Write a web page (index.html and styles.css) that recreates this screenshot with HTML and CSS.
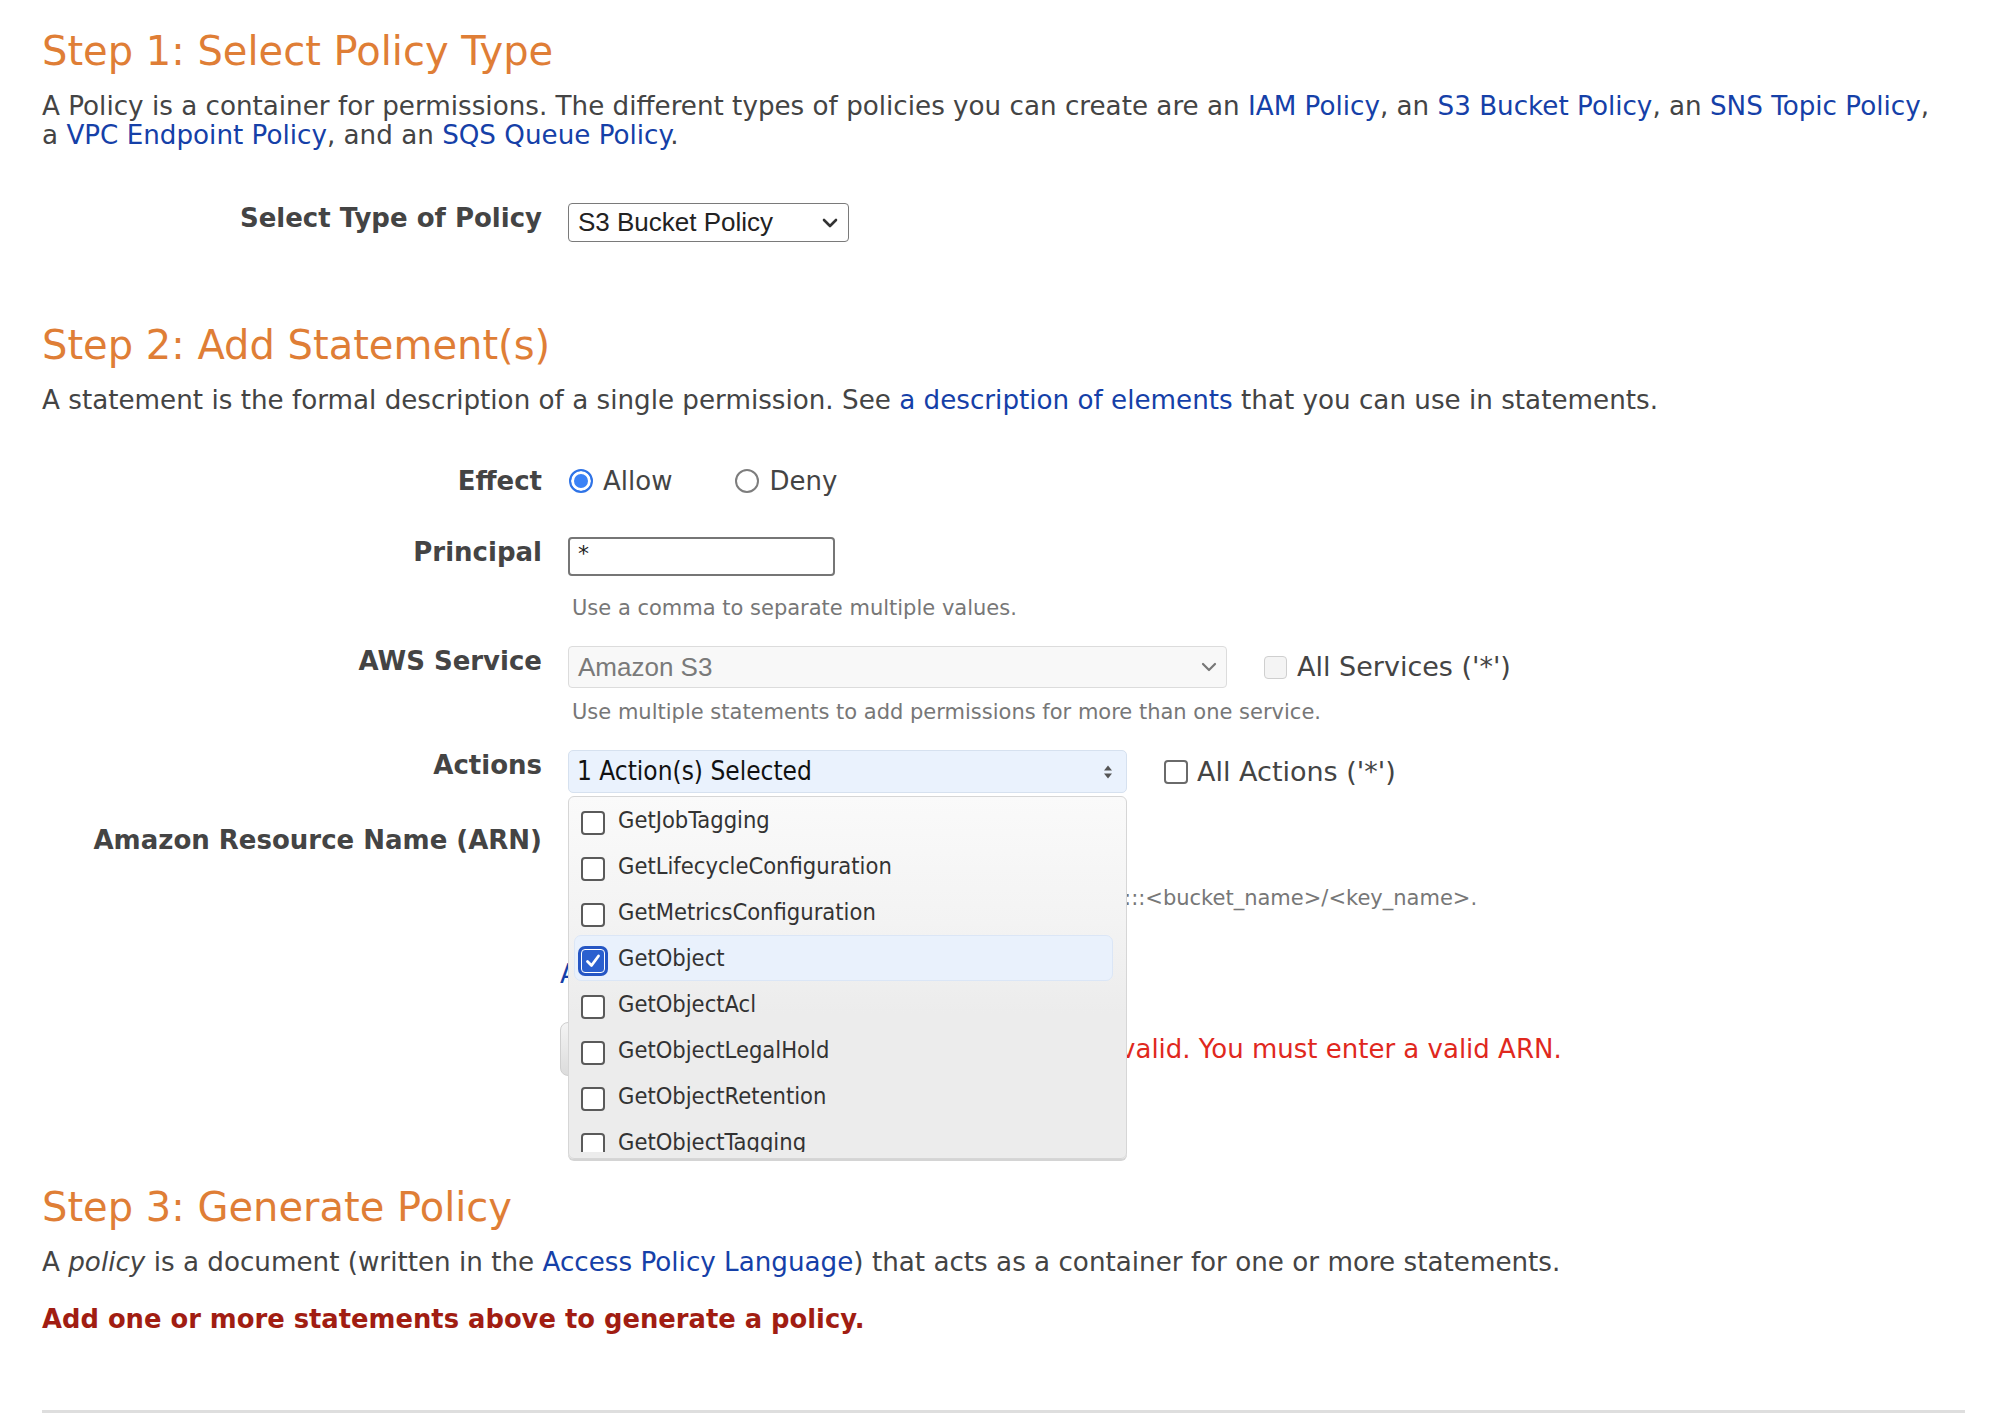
FILE: index.html
```html
<!DOCTYPE html>
<html lang="en">
<head>
<meta charset="utf-8">
<title>AWS Policy Generator</title>
<link rel="stylesheet" href="styles.css">
</head>
<body>
<div class="page">

  <section class="step">
    <h2 class="step-title">Step 1: Select Policy Type</h2>
    <p class="intro">A Policy is a container for permissions. The different types of policies you can create are an <a href="#">IAM Policy</a>, an <a href="#">S3 Bucket Policy</a>, an <a href="#">SNS Topic Policy</a>,<br>a <a href="#">VPC Endpoint Policy</a>, and an <a href="#">SQS Queue Policy</a>.</p>

    <div class="form-row row-type">
      <label class="form-label">Select Type of Policy</label>
      <div class="form-cell">
        <div class="select select-type">
          <span>S3 Bucket Policy</span>
          <svg class="chev" width="16" height="10" viewBox="0 0 16 10"><path d="M2 2 L8 8 L14 2" fill="none" stroke="#333" stroke-width="2.6" stroke-linecap="round" stroke-linejoin="round"/></svg>
        </div>
      </div>
    </div>
  </section>

  <section class="step step2">
    <h2 class="step-title">Step 2: Add Statement(s)</h2>
    <p class="intro">A statement is the formal description of a single permission. See <a href="#">a description of elements</a> that you can use in statements.</p>

    <div class="form-row row-effect">
      <label class="form-label">Effect</label>
      <div class="form-cell radios">
        <span class="radio-opt"><span class="radio is-checked"></span>Allow</span>
        <span class="radio-opt"><span class="radio"></span>Deny</span>
      </div>
    </div>

    <div class="form-row row-principal">
      <label class="form-label">Principal</label>
      <div class="form-cell">
        <div class="text-input">*</div>
        <div class="help help-principal">Use a comma to separate multiple values.</div>
      </div>
    </div>

    <div class="form-row row-service">
      <label class="form-label">AWS Service</label>
      <div class="form-cell">
        <div class="inline">
          <div class="select select-service">
            <span>Amazon S3</span>
            <svg class="chev" width="16" height="10" viewBox="0 0 16 10"><path d="M2 2 L8 8 L14 2" fill="none" stroke="#777" stroke-width="2.2" stroke-linecap="round" stroke-linejoin="round"/></svg>
          </div>
          <span class="check-opt"><span class="cb cb-disabled"></span>All Services ('*')</span>
        </div>
        <div class="help help-service">Use multiple statements to add permissions for more than one service.</div>
      </div>
    </div>

    <div class="form-row row-actions">
      <label class="form-label">Actions</label>
      <div class="form-cell">
        <div class="inline">
          <div class="multiselect">
            <div class="ms-button">
              <span>1 Action(s) Selected</span>
              <svg class="updown" width="10" height="16" viewBox="0 0 10 16"><path d="M1 6.5 L5 1.5 L9 6.5 Z M1 9.5 L5 14.5 L9 9.5 Z" fill="#555"/></svg>
            </div>
            <div class="ms-dropdown">
              <ul class="ms-list">
                <li class="ms-item"><span class="cb"></span>GetJobTagging</li>
                <li class="ms-item"><span class="cb"></span>GetLifecycleConfiguration</li>
                <li class="ms-item"><span class="cb"></span>GetMetricsConfiguration</li>
                <li class="ms-item is-selected"><span class="cb cb-checked"><svg width="20" height="20" viewBox="0 0 20 20"><path d="M4.5 10.5 L8.5 14.5 L15.5 5" fill="none" stroke="#fff" stroke-width="2.8" stroke-linecap="round" stroke-linejoin="round"/></svg></span>GetObject</li>
                <li class="ms-item"><span class="cb"></span>GetObjectAcl</li>
                <li class="ms-item"><span class="cb"></span>GetObjectLegalHold</li>
                <li class="ms-item"><span class="cb"></span>GetObjectRetention</li>
                <li class="ms-item"><span class="cb"></span>GetObjectTagging</li>
              </ul>
            </div>
          </div>
          <span class="check-opt check-actions"><span class="cb cb-plain"></span>All Actions ('*')</span>
        </div>
      </div>
    </div>

    <div class="form-row row-arn">
      <label class="form-label">Amazon Resource Name (ARN)</label>
      <div class="form-cell">
        <div class="text-input arn-input"></div>
        <div class="help help-arn">ARN should follow the following format: arn:aws:s3:::&lt;bucket_name&gt;/&lt;key_name&gt;.</div>
      </div>
    </div>

    <div class="form-row row-conditions">
      <span class="form-label"></span>
      <div class="form-cell shifted">
        <a href="#" class="cond-link">Add Conditions (Optional)</a>
      </div>
    </div>

    <div class="form-row row-submit">
      <span class="form-label"></span>
      <div class="form-cell shifted inline">
        <span class="btn">Add Statement</span>
        <span class="error">The ARN is not valid. You must enter a valid ARN.</span>
      </div>
    </div>
  </section>

  <section class="step step3">
    <h2 class="step-title">Step 3: Generate Policy</h2>
    <p class="intro">A <em>policy</em> is a document (written in the <a href="#">Access Policy Language</a>) that acts as a container for one or more statements.</p>
    <p class="notice">Add one or more statements above to generate a policy.</p>
  </section>

  <hr class="rule">
</div>
</body>
</html>
```

FILE: styles.css
```css
* { box-sizing: border-box; }

html, body {
  margin: 0;
  background: #ffffff;
}

body {
  font-family: "DejaVu Sans", Verdana, sans-serif;
  font-size: 26.2px;
  line-height: 29px;
  color: #444444;
}

.page {
  padding: 28px 25px 0 42px;
}

a {
  color: #1540a8;
  text-decoration: none;
}

.step-title {
  margin: 0;
  font-weight: normal;
  font-size: 40px;
  line-height: 46px;
  color: #df7e36;
}

.step2 { margin-top: 80px; }
.step3 { margin-top: 108px; }

.intro {
  margin: 18px 0 0;
  white-space: nowrap;
}

/* form grid */
.form-row {
  display: grid;
  grid-template-columns: 500px 1fr;
  column-gap: 26px;
  align-items: start;
}

.form-label {
  font-weight: bold;
  font-size: 26px;
  line-height: 30px;
  text-align: right;
  color: #444444;
}

.form-cell { min-width: 0; }

.inline {
  display: flex;
  align-items: center;
}

.row-type { margin-top: 53px; }
.row-effect { margin-top: 51px; }
.row-principal { margin-top: 41px; }
.row-service { margin-top: 26px; }
.row-actions { margin-top: 26px; }
.row-arn { margin-top: 32px; }
.row-conditions { margin-top: 50px; }
.row-submit { margin-top: 33px; }

/* selects */
.select {
  display: flex;
  align-items: center;
  justify-content: space-between;
  font-family: "Liberation Sans", Arial, sans-serif;
  border-radius: 4px;
  background: #fff;
}

.select-type {
  width: 281px;
  height: 39px;
  border: 1.5px solid #7a7a7a;
  padding: 0 10px 0 9px;
  font-size: 26px;
  color: #222;
}

.select-service {
  width: 659px;
  height: 42px;
  border: 1px solid #dcdcdc;
  background: #f8f8f8;
  padding: 0 9px 0 9px;
  font-size: 26px;
  color: #7a7a7a;
}

/* radios */
.radios {
  display: flex;
  align-items: center;
  height: 30px;
}

.radio-opt {
  display: inline-flex;
  align-items: center;
  font-size: 26px;
  line-height: 30px;
  color: #444;
}

.radio-opt + .radio-opt { margin-left: 62px; }

.radio {
  width: 24px;
  height: 24px;
  border-radius: 50%;
  border: 2px solid #7d7d7d;
  background: #fff;
  margin: 0 10px 0 1px;
  flex: none;
}

.radio.is-checked {
  border-color: #2f73e6;
  background: #3b82f6;
  box-shadow: inset 0 0 0 3px #fff;
}

/* text input */
.text-input {
  width: 267px;
  height: 39px;
  border: 2px solid #767676;
  border-radius: 4px;
  padding: 3px 0 0 8px;
  font-size: 22px;
  line-height: 24px;
  color: #222;
}

.arn-input { width: 559px; }

.help {
  font-size: 21px;
  line-height: 24px;
  color: #777;
  padding-left: 4px;
  white-space: nowrap;
}

.help-principal { margin-top: 20px; }
.help-service { margin-top: 12px; }
.help-arn { margin-top: 22px; padding-left: 20px; }

/* checkboxes */
.check-opt {
  display: inline-flex;
  align-items: center;
  font-size: 27px;
  line-height: 30px;
  color: #444;
  white-space: nowrap;
}

.row-service .check-opt { margin-left: 37px; }
.check-actions { margin-left: 37px; }

.cb {
  width: 24px;
  height: 24px;
  border-radius: 4px;
  border: 2px solid #5a5a5a;
  background: #fff;
  flex: none;
  display: inline-flex;
  align-items: center;
  justify-content: center;
}

.cb-disabled {
  width: 23px;
  height: 23px;
  border: 1.5px solid #cfcfcf;
  background: #f4f4f4;
  margin-right: 10px;
}

.cb-plain {
  border-color: #6a6a6a;
  margin-right: 9px;
}

/* multiselect */
.multiselect {
  position: relative;
  width: 559px;
  flex: none;
}

.ms-button {
  height: 43px;
  display: flex;
  align-items: center;
  justify-content: space-between;
  padding: 0 13px 0 8px;
  background: #eaf2fd;
  border: 1px solid #d6e1ef;
  border-radius: 5px;
  font-family: "DejaVu Sans Condensed", "DejaVu Sans", sans-serif;
  font-stretch: condensed;
  font-size: 26px;
  color: #111;
}

.ms-dropdown {
  position: absolute;
  top: calc(100% + 3px);
  left: 0;
  width: 559px;
  height: 363px;
  z-index: 10;
  border: 1px solid #d6d6d6;
  border-radius: 6px;
  background: linear-gradient(#fafafa 0%, #f3f3f3 35%, #ececec 60%, #ececec 100%);
  box-shadow: 0 2px 0 #d4d4d4;
  padding-bottom: 6px;
  overflow: hidden;
}

.ms-list {
  list-style: none;
  margin: 0;
  padding: 0;
  height: 100%;
  overflow: hidden;
}

.ms-item {
  display: flex;
  align-items: center;
  height: 46px;
  padding-left: 12px;
  font-family: "DejaVu Sans Condensed", "DejaVu Sans", sans-serif;
  font-stretch: condensed;
  font-size: 23.5px;
  color: #333;
  white-space: nowrap;
}

.ms-item .cb {
  margin-right: 13px;
  transform: translateY(3px);
}

.ms-item.is-selected {
  margin: 0 13px 0 5px;
  padding-left: 6px;
  background: #e9f1fc;
  border: 1px solid #dbe6f6;
  border-radius: 7px;
}

.ms-item.is-selected .cb { margin-right: 13px; }

.cb-checked {
  border: 1.5px solid #fff;
  background: #2b60cf;
  box-shadow: 0 0 0 3px #2556c4;
}

/* lower hidden content */
.shifted { margin-left: -8px; }

.cond-link {
  display: inline-block;
  font-size: 26px;
  line-height: 29px;
}

.btn {
  display: inline-flex;
  align-items: center;
  height: 54px;
  padding: 0 26px;
  border-radius: 8px;
  background: linear-gradient(#f4f4f4, #dcdcdc);
  border: 1px solid #cfcfcf;
  color: #333;
  font-size: 24px;
  width: 260px;
  flex: none;
}

.error {
  margin-left: 100px;
  font-size: 26px;
  color: #e0281d;
  white-space: nowrap;
}

.notice {
  margin: 27px 0 0;
  font-size: 25.8px;
  line-height: 30px;
  font-weight: bold;
  color: #a11d12;
}

.rule {
  margin: 76px 0 0;
  border: 0;
  height: 3px;
  background: #dedede;
}
```
